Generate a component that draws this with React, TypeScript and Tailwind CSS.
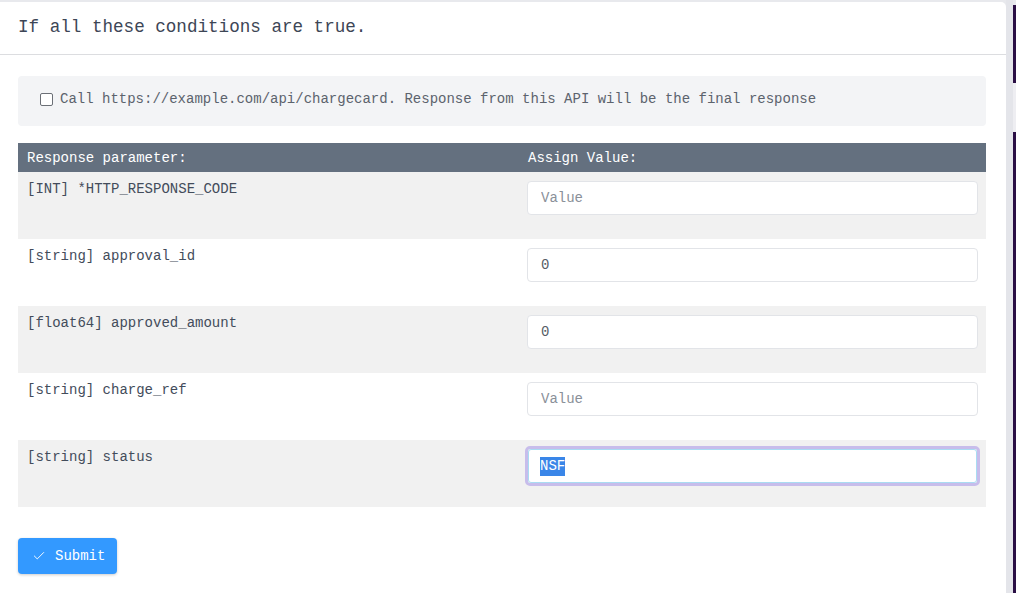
import { Check } from "lucide-react";

const mono = "font-['Liberation_Mono','DejaVu_Sans_Mono',monospace]";

interface ParamRow {
  label: string;
  value: string;
}

const rows: ParamRow[] = [
  { label: "[INT] *HTTP_RESPONSE_CODE", value: "" },
  { label: "[string] approval_id", value: "0" },
  { label: "[float64] approved_amount", value: "0" },
  { label: "[string] charge_ref", value: "" },
  { label: "[string] status", value: "NSF" },
];

function ValueInput({ value, focused }: { value: string; focused: boolean }) {
  if (focused) {
    // focused field with its text selected
    return (
      <div className="rounded-[5px] border-[3px] border-[#c7bdeb]">
        <div className="flex h-[34px] items-center rounded-[3px] border border-[#a9dcf2] bg-white px-[11px] text-sm text-[#4b5563]">
          <span className="bg-[#3a86e8] leading-[19px] text-white">{value}</span>
        </div>
      </div>
    );
  }
  return (
    <input
      readOnly
      value={value}
      placeholder="Value"
      className={`${mono} h-[34px] w-full rounded-[4px] border border-[#e2e4e8] bg-white px-[13px] text-sm text-[#555c66] outline-none placeholder:text-[#8a9099]`}
    />
  );
}

export default function App() {
  return (
    <div className={`${mono} flex h-[593px] w-[1016px] overflow-hidden bg-[#e8e9ed]`}>
      <div className="mt-[2px] flex w-[1006px] flex-col rounded-tr-[5px] bg-white">
        <div className="flex h-[53px] items-center border-b border-[#dcdde0] px-[18px] pb-[1px]">
          <h3 className="text-[17.6px] text-[#3d4656]">If all these conditions are true.</h3>
        </div>

        <div className="px-[18px] pr-[20px] pt-[21px]">
          <div className="flex h-[50px] items-center gap-[7px] rounded-[4px] bg-[#f3f4f6] px-[22px] pb-[4px] text-sm text-[#5c636d]">
            <span className="h-[13px] w-[13px] rounded-[2px] border-[1.5px] border-[#6b6f76] bg-white" />
            <span>
              Call https://example.com/api/chargecard. Response from this API will be the final response
            </span>
          </div>

          <div className="mt-[17px]">
            <div className="grid h-[29px] grid-cols-[501px_1fr] items-center bg-[#64707f] text-sm text-white">
              <span className="pl-[9px]">Response parameter:</span>
              <span className="pl-[9px]">Assign Value:</span>
            </div>
            {rows.map((row, i) => (
              <div
                key={row.label}
                className={`grid h-[67px] grid-cols-[501px_1fr] ${i % 2 === 0 ? "bg-[#f1f1f1]" : "bg-white"}`}
              >
                <span className="pl-[9px] pt-[7px] text-sm text-[#434c5b]">{row.label}</span>
                <div className={i === rows.length - 1 ? "pl-[6px] pr-[6px] pt-[6px]" : "pl-[8px] pr-[8px] pt-[9px]"}>
                  <ValueInput value={row.value} focused={i === rows.length - 1} />
                </div>
              </div>
            ))}
          </div>

          <button
            type="button"
            className="mt-[31px] flex h-[36px] items-center gap-[9px] rounded-[4px] bg-[#3399ff] pl-[14px] pr-[12px] text-sm text-white shadow-[0_1px_3px_rgba(0,0,0,0.2)]"
          >
            <Check size={14} strokeWidth={1.6} />
            Submit
          </button>
        </div>
      </div>

      <div className="flex w-[10px]">
        <div className="w-[7px] bg-[#e4e5ea]" />
        <div className="flex w-[3px] flex-col">
          <div className="h-[5px] bg-[#e8e9ed]" />
          <div className="h-[78px] bg-[#2b0f45]" />
          <div className="h-[49px] bg-[#eeeef2]" />
          <div className="flex-1 bg-[#2b0f45]" />
        </div>
      </div>
    </div>
  );
}
